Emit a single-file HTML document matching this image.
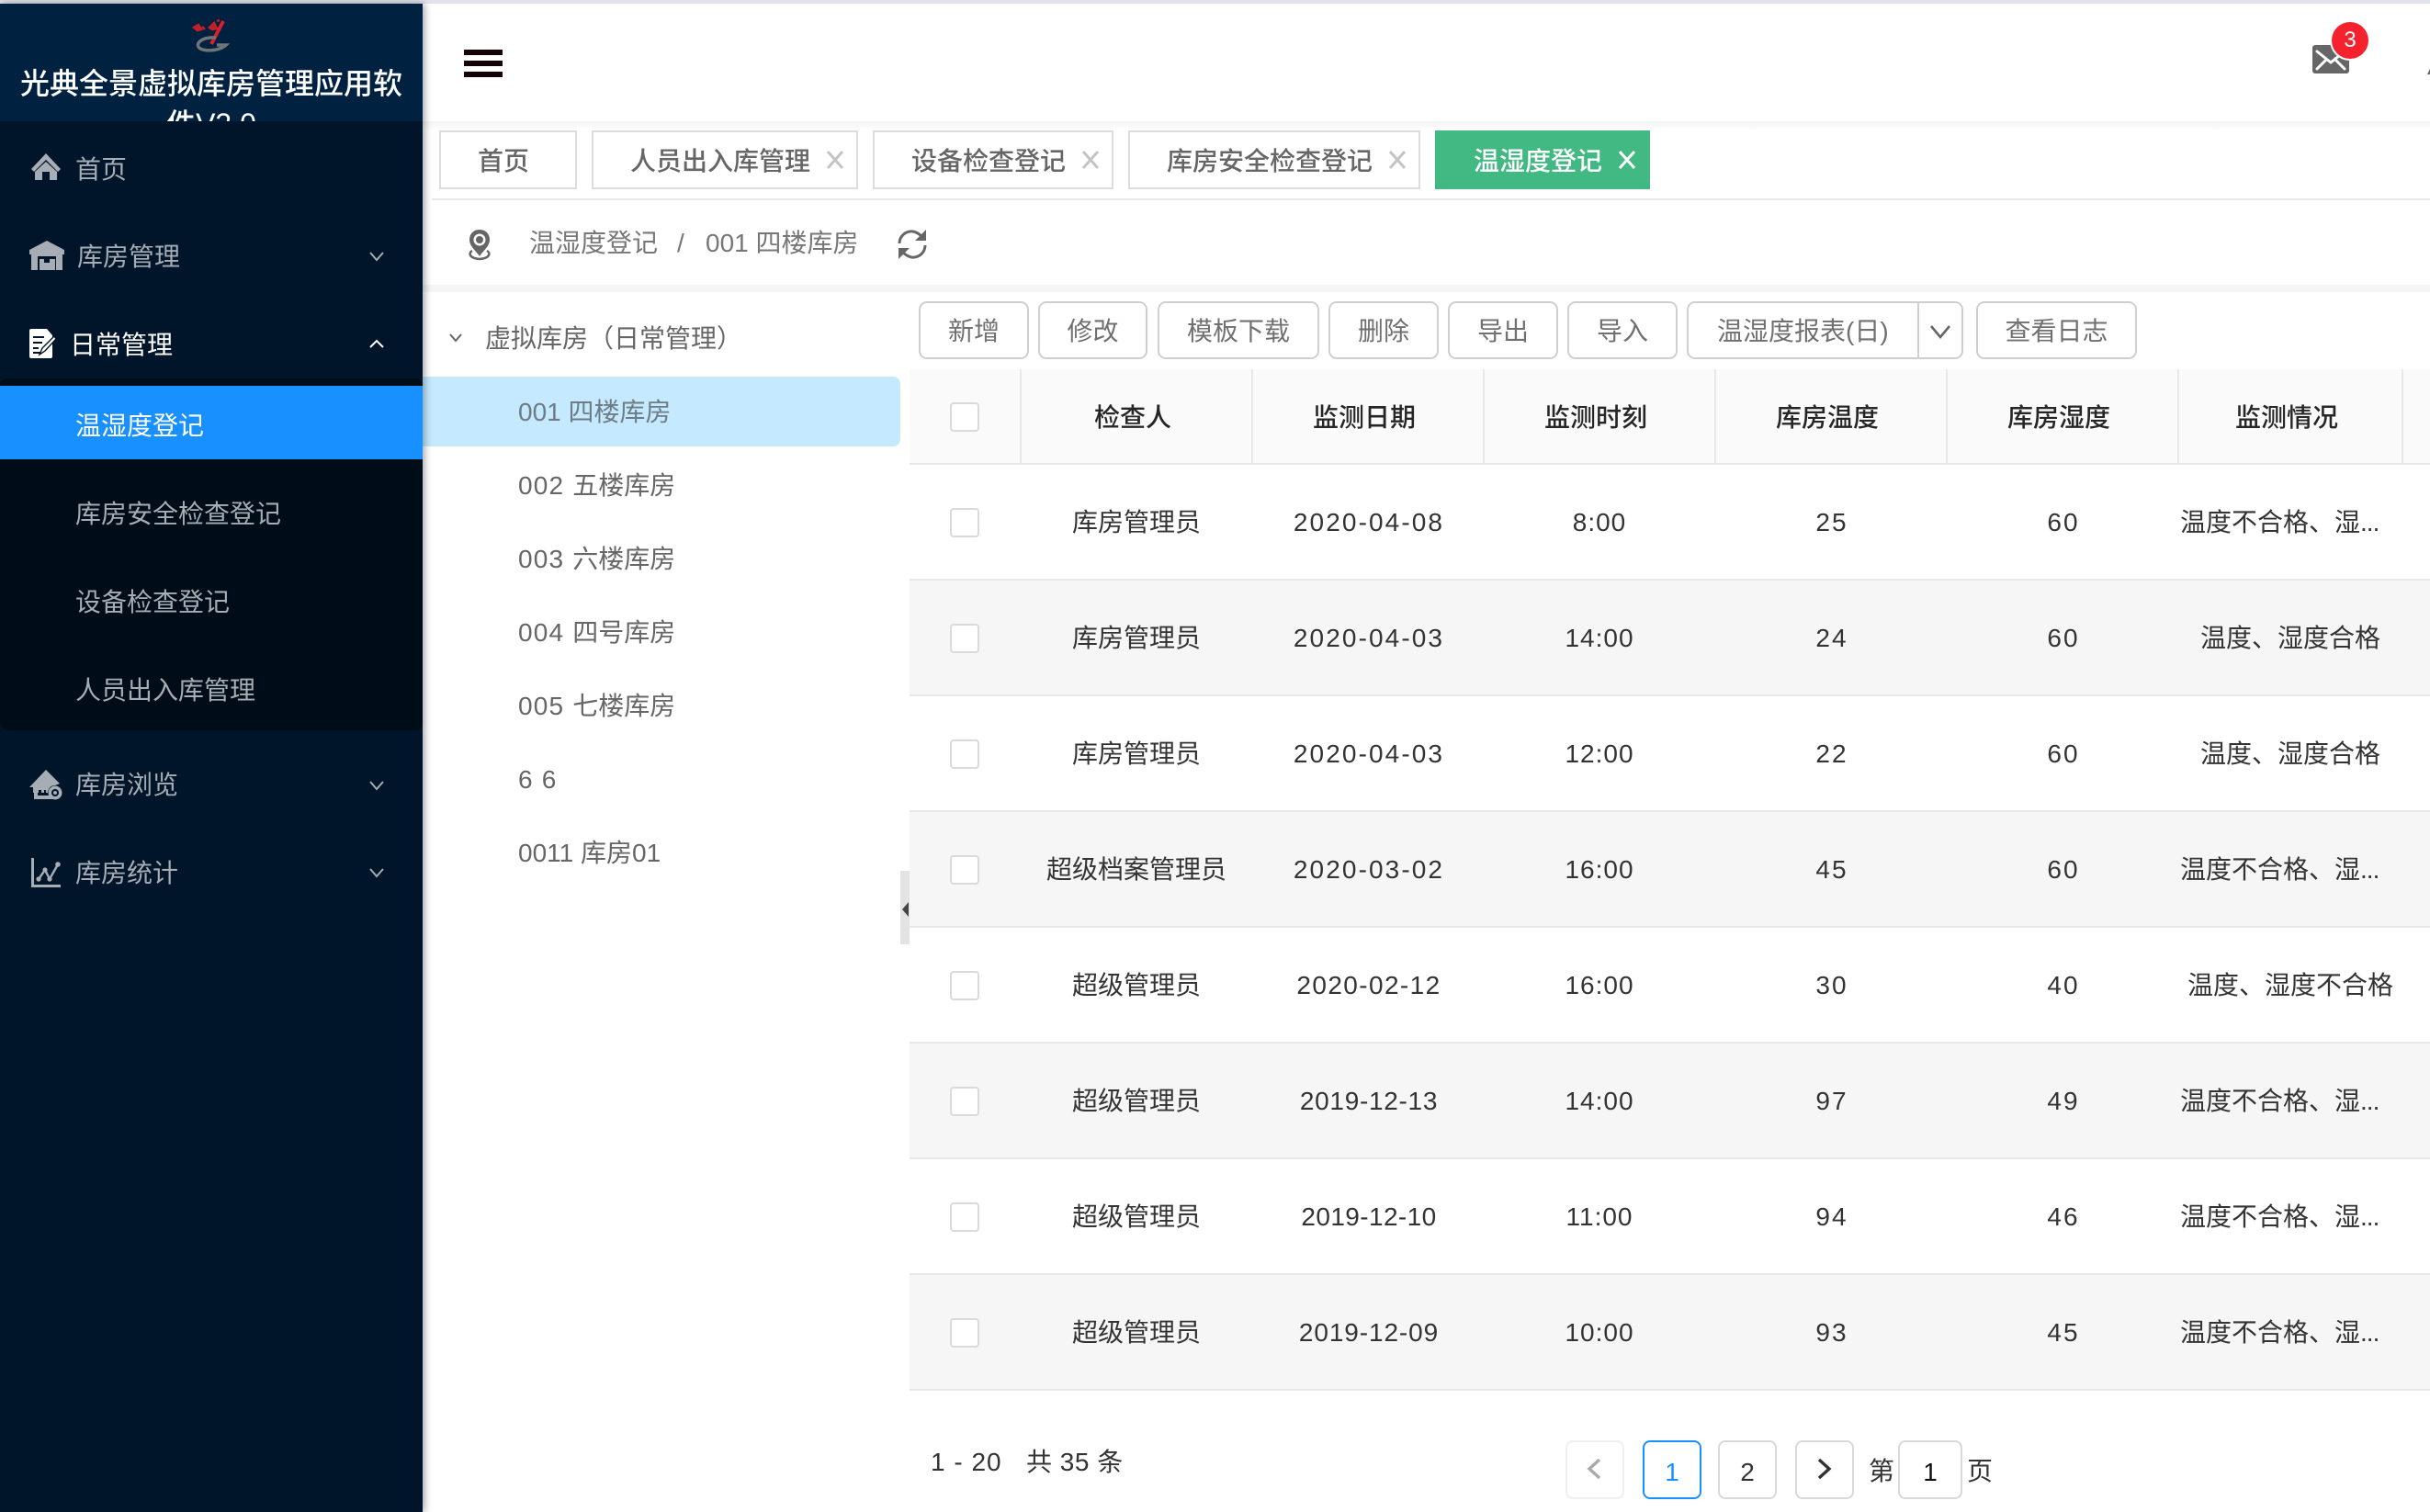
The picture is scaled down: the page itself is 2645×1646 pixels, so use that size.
<!DOCTYPE html>
<html lang="zh"><head><meta charset="utf-8"><title>温湿度登记</title>
<style>
html,body{margin:0;padding:0;background:#fff}
body{position:relative;width:2645px;height:1646px;overflow:hidden;font-family:"Liberation Sans","Noto Sans CJK SC",sans-serif;font-size:28px;color:#333}
div,span,svg{position:absolute;box-sizing:border-box}
.t{white-space:nowrap;line-height:40px;height:40px}
.c{text-align:center}
.m{color:#a6adb4}
.tab{top:142px;height:64px;border:2px solid #dcdcdc;background:#fff}
.tt{top:156px;color:#666;font-weight:500}
.x{top:162px;width:20px;height:24px}
.b{top:328px;height:63px;border:2px solid #cfcfcf;border-radius:9px;background:#fff;color:#707070;text-align:center;line-height:61px;white-space:nowrap}
.cb{left:1034px;width:32px;height:32px;border:2px solid #dadada;border-radius:4px;background:#fff}
.th{top:435px;color:#262626;font-weight:500;width:252px;text-align:center;line-height:40px;white-space:nowrap}
.d{top:402px;width:2px;height:102px;background:#e8e8e8}
.r{left:990px;width:1655px;height:126px;border-bottom:2px solid #e8e8e8}
.r.g{background:#f6f6f6}
.r span{top:43px;line-height:40px;white-space:nowrap;text-align:center;color:#333}
.r .cb{top:47px;left:44px}
.a{left:7px;width:480px}.e{left:300px;width:400px}.f{left:551px;width:400px;letter-spacing:1px}.h{left:804px;width:400px;letter-spacing:2px}.i{left:1056px;width:400px;letter-spacing:2px}.j{left:1303px;width:400px}
.k{left:1383px;width:240px;text-align:left!important}
.k i{position:static;font-style:normal;letter-spacing:-1px}
.tree{left:564px;color:#666;line-height:40px;height:40px;white-space:nowrap}
.tree i{position:static;font-style:normal;letter-spacing:1.2px}
.pg{top:1568px;width:64px;height:64px;border:2px solid #d9d9d9;border-radius:8px;background:#fff;text-align:center;line-height:66px;color:#333}
</style></head><body>
<div style="left:0;top:0;width:2645px;height:4px;background:#e3e3ea"></div>

<!-- main area chrome -->
<div style="left:460px;top:132px;width:2185px;height:10px;background:linear-gradient(#f3f3f3,#fff)"></div>
<div style="left:470px;top:216px;width:2175px;height:2px;background:#e8e8e8"></div>
<div style="left:460px;top:310px;width:2185px;height:8px;background:#f5f5f5"></div>

<!-- hamburger -->
<div style="left:505px;top:54px;width:42px;height:6px;background:#150204"></div>
<div style="left:505px;top:66px;width:42px;height:6px;background:#150204"></div>
<div style="left:505px;top:78px;width:42px;height:6px;background:#150204"></div>

<!-- mail -->
<svg style="left:2500px;top:15px" width="145" height="80" viewBox="0 0 145 80">
<rect x="17" y="34" width="40" height="31" rx="3" fill="#666"/>
<path d="M22 41 L37 53 L52 41 M22 60 L32 50 M52 60 L42 50" stroke="#fff" stroke-width="3" fill="none" stroke-linecap="round"/>
<circle cx="58" cy="29" r="22" fill="#fff"/>
<circle cx="58" cy="29" r="20" fill="#f5222d"/>
<path d="M142 66 L145 60 V66Z" fill="#666"/>
</svg>
<div class="t c" style="left:2538px;top:24px;width:40px;color:#fff;font-size:24px;">3</div>

<!-- tabs -->
<div class="tab" style="left:478px;width:150px"></div>
<div class="t tt" style="left:520px">首页</div>
<div class="tab" style="left:644px;width:290px"></div>
<div class="t tt" style="left:686px">人员出入库管理</div>
<svg class="x" style="left:899px" viewBox="0 0 20 24"><path d="M2 3 L18 21 M18 3 L2 21" stroke="#c4c4c4" stroke-width="3"/></svg>
<div class="tab" style="left:950px;width:262px"></div>
<div class="t tt" style="left:992px">设备检查登记</div>
<svg class="x" style="left:1177px" viewBox="0 0 20 24"><path d="M2 3 L18 21 M18 3 L2 21" stroke="#c4c4c4" stroke-width="3"/></svg>
<div class="tab" style="left:1228px;width:318px"></div>
<div class="t tt" style="left:1270px">库房安全检查登记</div>
<svg class="x" style="left:1511px" viewBox="0 0 20 24"><path d="M2 3 L18 21 M18 3 L2 21" stroke="#c4c4c4" stroke-width="3"/></svg>
<div class="tab" style="left:1562px;width:234px;background:#42b983;border-color:#42b983"></div>
<div class="t tt" style="left:1604px;color:#fff">温湿度登记</div>
<svg class="x" style="left:1761px" viewBox="0 0 20 24"><path d="M2 3 L18 21 M18 3 L2 21" stroke="#fff" stroke-width="3"/></svg>

<!-- breadcrumb -->
<svg style="left:507px;top:248px" width="30" height="36" viewBox="0 0 30 36">
<path d="M15 2 C8 2 4 7 4 13 C4 20 11 25 15 31 C19 25 26 20 26 13 C26 7 22 2 15 2Z" fill="#666"/>
<circle cx="15" cy="13" r="6.5" fill="#fff"/><circle cx="15" cy="13" r="4" fill="#666"/>
<path d="M7 25 C3 27 3 33 15 34 C27 33 27 27 23 25" stroke="#666" stroke-width="2.5" fill="none"/>
</svg>
<div class="t" style="left:576px;top:245px;color:#777">温湿度登记</div>
<div class="t" style="left:737px;top:245px;color:#777">/</div>
<div class="t" style="left:768px;top:245px;color:#777">001 四楼库房</div>
<svg style="left:975px;top:248px" width="36" height="36" viewBox="0 0 36 36">
<path d="M4 17 C4 9 11 3 19 4 C24 5 27 8 29 10" stroke="#666" stroke-width="3" fill="none"/>
<path d="M33 2 V14 H21Z" fill="#666"/>
<path d="M32 19 C32 27 25 33 17 32 C12 31 9 28 7 26" stroke="#666" stroke-width="3" fill="none"/>
<path d="M3 34 V22 H15Z" fill="#666"/>
</svg>

<!-- tree -->
<svg style="left:488px;top:361px" width="16" height="14" viewBox="0 0 16 14"><path d="M2 3 L8 10 L14 3" stroke="#666" stroke-width="2" fill="none"/></svg>
<div class="tree" style="left:528px;top:349px">虚拟库房（日常管理）</div>
<div style="left:460px;top:410px;width:520px;height:76px;background:#c5e9fe;border-radius:0 8px 8px 0"></div>
<div class="tree" style="top:429px;color:#6e7c86">001 四楼库房</div>
<div class="tree" style="top:509px"><i>002 </i>五楼库房</div>
<div class="tree" style="top:589px"><i>003 </i>六楼库房</div>
<div class="tree" style="top:669px"><i>004 </i>四号库房</div>
<div class="tree" style="top:749px"><i>005 </i>七楼库房</div>
<div class="tree" style="top:829px"><i>6 6</i></div>
<div class="tree" style="top:909px">0011 库房01</div>

<!-- toolbar -->
<div class="b" style="left:1000px;width:120px">新增</div>
<div class="b" style="left:1130px;width:119px">修改</div>
<div class="b" style="left:1260px;width:176px">模板下载</div>
<div class="b" style="left:1446px;width:120px">删除</div>
<div class="b" style="left:1576px;width:120px">导出</div>
<div class="b" style="left:1706px;width:120px">导入</div>
<div class="b" style="left:1836px;width:301px;text-align:left;padding-left:31px">温湿度报表(日)</div>
<div style="left:2087px;top:328px;width:2px;height:63px;background:#cfcfcf"></div>
<svg style="left:2100px;top:351px" width="24" height="20" viewBox="0 0 24 20"><path d="M2 4 L12 16 L22 4" stroke="#666" stroke-width="2.6" fill="none"/></svg>
<div class="b" style="left:2151px;width:175px">查看日志</div>

<!-- table head -->
<div style="left:990px;top:402px;width:1655px;height:104px;background:#fafafa;border-bottom:2px solid #e8e8e8"></div>
<div class="cb" style="top:438px"></div>
<div class="d" style="left:1110px"></div><div class="d" style="left:1362px"></div><div class="d" style="left:1614px"></div><div class="d" style="left:1866px"></div><div class="d" style="left:2118px"></div><div class="d" style="left:2370px"></div><div class="d" style="left:2614px"></div>
<div class="th" style="left:1107px">检查人</div>
<div class="th" style="left:1359px">监测日期</div>
<div class="th" style="left:1611px">监测时刻</div>
<div class="th" style="left:1863px">库房温度</div>
<div class="th" style="left:2115px">库房湿度</div>
<div class="th" style="left:2363px">监测情况</div>

<!-- rows -->
<div class="r" style="top:506px"><div class="cb"></div><span class="a">库房管理员</span><span class="e" style="letter-spacing:2.1px">2020-04-08</span><span class="f">8:00</span><span class="h">25</span><span class="i">60</span><span class="k">温度不合格、湿<i>...</i></span></div>
<div class="r g" style="top:632px"><div class="cb"></div><span class="a">库房管理员</span><span class="e" style="letter-spacing:2.1px">2020-04-03</span><span class="f">14:00</span><span class="h">24</span><span class="i">60</span><span class="j">温度、湿度合格</span></div>
<div class="r" style="top:758px"><div class="cb"></div><span class="a">库房管理员</span><span class="e" style="letter-spacing:2.1px">2020-04-03</span><span class="f">12:00</span><span class="h">22</span><span class="i">60</span><span class="j">温度、湿度合格</span></div>
<div class="r g" style="top:884px"><div class="cb"></div><span class="a">超级档案管理员</span><span class="e" style="letter-spacing:2.1px">2020-03-02</span><span class="f">16:00</span><span class="h">45</span><span class="i">60</span><span class="k">温度不合格、湿<i>...</i></span></div>
<div class="r" style="top:1010px"><div class="cb"></div><span class="a">超级管理员</span><span class="e" style="letter-spacing:1.4px">2020-02-12</span><span class="f">16:00</span><span class="h">30</span><span class="i">40</span><span class="j">温度、湿度不合格</span></div>
<div class="r g" style="top:1136px"><div class="cb"></div><span class="a">超级管理员</span><span class="e" style="letter-spacing:.7px">2019-12-13</span><span class="f">14:00</span><span class="h">97</span><span class="i">49</span><span class="k">温度不合格、湿<i>...</i></span></div>
<div class="r" style="top:1262px"><div class="cb"></div><span class="a">超级管理员</span><span class="e" style="letter-spacing:.4px">2019-12-10</span><span class="f">11:00</span><span class="h">94</span><span class="i">46</span><span class="k">温度不合格、湿<i>...</i></span></div>
<div class="r g" style="top:1388px"><div class="cb"></div><span class="a">超级管理员</span><span class="e" style="letter-spacing:.9px">2019-12-09</span><span class="f">10:00</span><span class="h">93</span><span class="i">45</span><span class="k">温度不合格、湿<i>...</i></span></div>

<!-- collapse handle -->
<div style="left:980px;top:948px;width:10px;height:80px;background:#e3e3e3"></div>
<svg style="left:980px;top:980px" width="10" height="20" viewBox="0 0 10 20"><path d="M2 10 L9 2 V18Z" fill="#444"/></svg>

<!-- pagination -->
<div class="t" style="left:1013px;top:1572px;letter-spacing:1px">1 - 20</div>
<div class="t" style="left:1117px;top:1572px;letter-spacing:.5px">共 35 条</div>
<div class="pg" style="left:1704px;border-color:#efefef"></div>
<svg style="left:1724px;top:1586px" width="22" height="26" viewBox="0 0 22 26"><path d="M17 3 L6 13 L17 23" stroke="#aaa" stroke-width="3.4" fill="none"/></svg>
<div class="pg" style="left:1788px;border-color:#1890ff;color:#1890ff">1</div>
<div class="pg" style="left:1870px">2</div>
<div class="pg" style="left:1954px"></div>
<svg style="left:1975px;top:1586px" width="22" height="26" viewBox="0 0 22 26"><path d="M5 3 L16 13 L5 23" stroke="#333" stroke-width="3.4" fill="none"/></svg>
<div class="t" style="left:2034px;top:1582px">第</div>
<div class="pg" style="left:2066px;width:70px;color:#111">1</div>
<div class="t" style="left:2141px;top:1582px">页</div>

<!-- sidebar -->
<div style="left:0;top:4px;width:460px;height:1642px;background:#001529;box-shadow:2px 0 8px rgba(0,21,41,.4);overflow:hidden">
 <div style="left:0;top:0;width:460px;height:128px;background:#002140;overflow:hidden">
  <svg style="left:205px;top:14px" width="50" height="42" viewBox="0 0 50 42">
   <path d="M6 12 l5 -3 l3 5 l-4 1z M15 11 l3 3 M23 12 l5 -5 l3 6 l-5 1z M31 5 l3 -1" stroke="#c0202a" stroke-width="2.5" fill="#c0202a"/>
   <path d="M38 5 L25 30" stroke="#d8202a" stroke-width="4"/>
   <path d="M30 23 C14 22 6 30 13 35 C22 39 36 36 41 31 H31" stroke="#6f7478" stroke-width="3.5" fill="none"/>
  </svg>
  <div class="c" style="left:10px;top:65px;width:440px;font-size:32px;line-height:44px;color:#fff;white-space:normal;font-weight:500">光典全景虚拟库房管理应用软件V3.0</div>
 </div>
 <div style="left:0;top:408px;width:460px;height:383px;background:#000c17;border-radius:8px"></div>
 <div style="left:0;top:416px;width:460px;height:80px;background:#1890ff"></div>
</div>

<svg style="left:0;top:0" width="460" height="1000" viewBox="0 0 460 1000" fill="#a6adb4">
 <!-- home -->
 <path d="M34 184 L50 167 L66 184 L63 187 L50 174 L37 187Z"/>
 <path d="M38 187 L50 176 L62 187 V196 H54 V187 H46 V196 H38Z"/>
 <!-- warehouse -->
 <path d="M32 272 L51 262 L70 272 V277 H68 V294 H61 V279 H41 V294 H34 V277 H32Z"/>
 <path d="M43 282 H48 V286 H54 V282 H60 V294 H43Z"/>
 <!-- daily doc -->
 <path d="M32 360 Q32 358 34 358 H51 L57 365 V388 Q57 390 55 390 H34 Q32 390 32 388Z" fill="#fff"/>
 <path d="M36 367 H48 M36 373 H46 M36 379 H42 M36 384 H44" stroke="#001529" stroke-width="2"/>
 <path d="M43 386 L46 379 L59 366 L61 369 L49 382Z" fill="#fff" stroke="#001529" stroke-width="1.4"/>
 <!-- browse -->
 <path d="M32 857 L50 838 L65 853 L60 855 C55 855 53 858 52 862 L52 863 H36 V857Z"/>
 <path d="M37 859 V870 H58 L55 866 H41 V859Z"/>
 <path d="M42 860 H45 V863 H48 V860 H50 V866 H42Z" fill="#001529"/>
 <circle cx="60" cy="863" r="7.5"/><circle cx="60" cy="863" r="4" fill="#001529"/><circle cx="60" cy="863" r="2"/>
 <!-- stats -->
 <path d="M34 934 H37 V963 H66 V966 H34Z"/>
 <path d="M42 957 L49 947 L54 957 L63 941" stroke="#a6adb4" stroke-width="2.4" fill="none"/>
 <circle cx="42" cy="957" r="2.6"/><circle cx="49" cy="947" r="2.6"/><circle cx="54" cy="957" r="2.6"/><circle cx="63" cy="941" r="2.8"/>
 <!-- chevrons -->
 <g fill="none" stroke="#a6adb4" stroke-width="2">
  <path d="M403 275 L410 283 L417 275"/>
  <path d="M403 851 L410 859 L417 851"/>
  <path d="M403 946 L410 954 L417 946"/>
 </g>
 <path d="M403 378 L410 371 L417 378" fill="none" stroke="#fff" stroke-width="2"/>
</svg>

<div class="t m" style="left:82px;top:165px">首页</div>
<div class="t m" style="left:84px;top:260px">库房管理</div>
<div class="t" style="left:76px;top:356px;color:#fff">日常管理</div>
<div class="t" style="left:82px;top:444px;color:#fff">温湿度登记</div>
<div class="t m" style="left:82px;top:540px">库房安全检查登记</div>
<div class="t m" style="left:82px;top:636px">设备检查登记</div>
<div class="t m" style="left:82px;top:732px">人员出入库管理</div>
<div class="t m" style="left:82px;top:835px">库房浏览</div>
<div class="t m" style="left:82px;top:931px">库房统计</div>
</body></html>
